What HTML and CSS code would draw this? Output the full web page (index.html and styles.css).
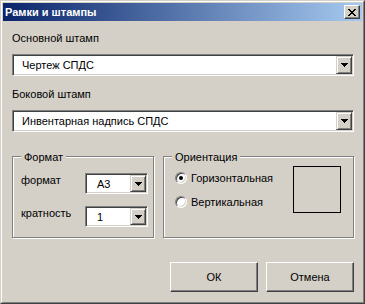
FILE: index.html
```html
<!DOCTYPE html>
<html lang="ru">
<head>
  <meta charset="UTF-8">
  <title>Рамки и штампы</title>
  <link rel="stylesheet" href="styles.css">
</head>
<body>
  <div class="window">
    <div class="frame">
      <div class="titlebar">
        <span class="title">Рамки и штампы</span>
        <span class="close">
          <svg width="8" height="7" viewBox="0 0 8 7" shape-rendering="crispEdges">
            <path d="M0 0h2v1h-2zM6 0h2v1h-2zM1 1h2v1h-2zM5 1h2v1h-2zM2 2h4v1h-4zM3 3h2v1h-2zM2 4h4v1h-4zM1 5h2v1h-2zM5 5h2v1h-2zM0 6h2v1h-2zM6 6h2v1h-2z" fill="#000"/>
          </svg>
        </span>
      </div>
      <div class="content">
        <div class="label">Основной штамп</div>
        <div class="combo combo-wide">
          <span class="combo-text">Чертеж СПДС</span>
          <span class="combo-btn"><svg width="7" height="4" viewBox="0 0 7 4" shape-rendering="crispEdges"><path d="M0 0h7v1h-7zM1 1h5v1h-5zM2 2h3v1h-3zM3 3h1v1h-1z" fill="#000"/></svg></span>
        </div>
        <div class="label label-second">Боковой штамп</div>
        <div class="combo combo-wide">
          <span class="combo-text">Инвентарная надпись СПДС</span>
          <span class="combo-btn"><svg width="7" height="4" viewBox="0 0 7 4" shape-rendering="crispEdges"><path d="M0 0h7v1h-7zM1 1h5v1h-5zM2 2h3v1h-3zM3 3h1v1h-1z" fill="#000"/></svg></span>
        </div>
        <div class="groups">
          <div class="group group-format">
            <span class="legend">Формат</span>
            <div class="field">
              <span class="field-label">формат</span>
              <div class="combo combo-small">
                <span class="combo-text">А3</span>
                <span class="combo-btn"><svg width="7" height="4" viewBox="0 0 7 4" shape-rendering="crispEdges"><path d="M0 0h7v1h-7zM1 1h5v1h-5zM2 2h3v1h-3zM3 3h1v1h-1z" fill="#000"/></svg></span>
              </div>
            </div>
            <div class="field">
              <span class="field-label">кратность</span>
              <div class="combo combo-small">
                <span class="combo-text">1</span>
                <span class="combo-btn"><svg width="7" height="4" viewBox="0 0 7 4" shape-rendering="crispEdges"><path d="M0 0h7v1h-7zM1 1h5v1h-5zM2 2h3v1h-3zM3 3h1v1h-1z" fill="#000"/></svg></span>
              </div>
            </div>
          </div>
          <div class="group group-orient">
            <span class="legend">Ориентация</span>
            <div class="radios">
              <div class="radio-row"><span class="radio checked"></span>Горизонтальная</div>
              <div class="radio-row"><span class="radio"></span>Вертикальная</div>
            </div>
            <div class="preview"></div>
          </div>
        </div>
        <div class="buttons">
          <button class="btn">ОК</button>
          <button class="btn">Отмена</button>
        </div>
      </div>
    </div>
  </div>
</body>
</html>
```

FILE: styles.css
```css
body {
  margin: 0;
  font-family: 'Liberation Sans', Arial, sans-serif;
  font-size: 11px;
  line-height: 14px;
  color: #000;
  background: #d4d0c8;
}
.window {
  width: 365px;
  height: 304px;
  box-sizing: border-box;
  border: 1px solid;
  border-color: #d4d0c8 #404040 #404040 #d4d0c8;
  background: #d4d0c8;
}
.frame {
  height: 100%;
  box-sizing: border-box;
  border: 1px solid;
  border-color: #fff #808080 #808080 #fff;
  padding: 1px;
}
.titlebar {
  height: 18px;
  display: flex;
  align-items: center;
  justify-content: space-between;
  padding-left: 2px;
  background: linear-gradient(to right, #0a246a, #a6caf0);
}
.title {
  color: #fff;
  font-weight: bold;
}
.close {
  width: 16px;
  height: 14px;
  margin-right: 2px;
  box-sizing: border-box;
  display: flex;
  align-items: center;
  justify-content: center;
  background: #d4d0c8;
  border: 1px solid;
  border-color: #fff #404040 #404040 #fff;
  box-shadow: inset -1px -1px 0 #808080;
}
.content {
  padding: 10px 8px 0 9px;
}
.label-second {
  margin-top: 11px;
}
.combo {
  display: flex;
  box-sizing: border-box;
  padding: 1px;
  background: #fff;
  border: 1px solid;
  border-color: #808080 #fff #fff #808080;
  box-shadow: inset 1px 1px 0 #404040, inset -1px -1px 0 #d4d0c8;
}
.combo-wide {
  height: 22px;
  margin-top: 9px;
}
.combo-small {
  width: 63px;
  height: 21px;
}
.combo-text {
  flex: 1;
  display: flex;
  align-items: center;
  padding-left: 8px;
  white-space: nowrap;
}
.combo-small .combo-text {
  padding-left: 10px;
}
.combo-btn {
  width: 16px;
  box-sizing: border-box;
  display: flex;
  align-items: center;
  justify-content: center;
  background: #d4d0c8;
  border: 1px solid;
  border-color: #d4d0c8 #404040 #404040 #d4d0c8;
  box-shadow: inset 1px 1px 0 #fff, inset -1px -1px 0 #808080;
}
.groups {
  display: flex;
  gap: 9px;
  margin-top: 24px;
}
.group {
  position: relative;
  height: 82px;
  box-sizing: border-box;
  border: 1px solid #808080;
  box-shadow: inset 1px 1px 0 #fff, 1px 1px 0 #fff;
}
.legend {
  position: absolute;
  top: -7px;
  left: 8px;
  padding: 0 3px;
  background: #d4d0c8;
}
.group-format {
  width: 142px;
  padding: 16px 0 0 8px;
  display: flex;
  flex-direction: column;
  gap: 12px;
}
.field {
  display: flex;
  align-items: flex-start;
}
.field-label {
  width: 64px;
}
.group-orient {
  flex: 1;
  display: flex;
  justify-content: space-between;
  padding: 9px 12px 0 11px;
}
.radios {
  padding-top: 5px;
  display: flex;
  flex-direction: column;
  gap: 10px;
}
.radio-row {
  display: flex;
  align-items: center;
  gap: 4px;
}
.radio {
  position: relative;
  width: 12px;
  height: 12px;
  box-sizing: border-box;
  border-radius: 50%;
  background: #fff;
  border: 1px solid;
  border-color: #808080 #fff #fff #808080;
  box-shadow: inset 1px 1px 0 #404040, inset -1px -1px 0 #d4d0c8;
}
.radio.checked::after {
  content: "";
  position: absolute;
  left: 3px;
  top: 3px;
  width: 4px;
  height: 4px;
  border-radius: 50%;
  background: #000;
}
.preview {
  width: 48px;
  height: 47px;
  box-sizing: border-box;
  border: 1px solid #000;
}
.buttons {
  display: flex;
  justify-content: flex-end;
  gap: 8px;
  margin-top: 24px;
}
.btn {
  width: 88px;
  height: 30px;
  padding: 0;
  font: inherit;
  color: #000;
  background: #d4d0c8;
  border: 1px solid;
  border-color: #fff #404040 #404040 #fff;
  box-shadow: inset -1px -1px 0 #808080;
}
```
